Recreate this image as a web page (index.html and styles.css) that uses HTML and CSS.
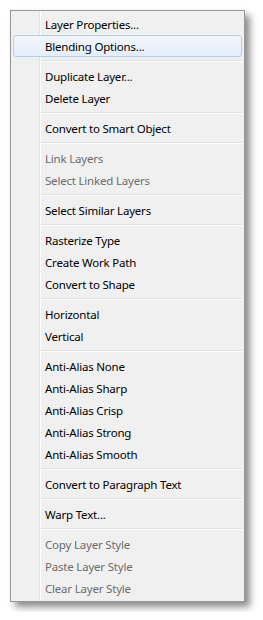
FILE: index.html
```html
<!DOCTYPE html>
<html>
<head>
  <meta charset="UTF-8">
  <title>Layer Context Menu</title>
  <link rel="stylesheet" href="styles.css">
</head>
<body>
  <div class="menu">
    <div class="menu__item">Layer Properties...</div>
    <div class="menu__item menu__item--hover">Blending Options...</div>
    <div class="menu__sep"></div>
    <div class="menu__item">Duplicate Layer...</div>
    <div class="menu__item">Delete Layer</div>
    <div class="menu__sep"></div>
    <div class="menu__item">Convert to Smart Object</div>
    <div class="menu__sep"></div>
    <div class="menu__item menu__item--disabled">Link Layers</div>
    <div class="menu__item menu__item--disabled">Select Linked Layers</div>
    <div class="menu__sep"></div>
    <div class="menu__item">Select Similar Layers</div>
    <div class="menu__sep"></div>
    <div class="menu__item">Rasterize Type</div>
    <div class="menu__item">Create Work Path</div>
    <div class="menu__item">Convert to Shape</div>
    <div class="menu__sep"></div>
    <div class="menu__item">Horizontal</div>
    <div class="menu__item">Vertical</div>
    <div class="menu__sep"></div>
    <div class="menu__item">Anti-Alias None</div>
    <div class="menu__item">Anti-Alias Sharp</div>
    <div class="menu__item">Anti-Alias Crisp</div>
    <div class="menu__item">Anti-Alias Strong</div>
    <div class="menu__item">Anti-Alias Smooth</div>
    <div class="menu__sep"></div>
    <div class="menu__item">Convert to Paragraph Text</div>
    <div class="menu__sep"></div>
    <div class="menu__item">Warp Text...</div>
    <div class="menu__sep"></div>
    <div class="menu__item menu__item--disabled">Copy Layer Style</div>
    <div class="menu__item menu__item--disabled">Paste Layer Style</div>
    <div class="menu__item menu__item--disabled">Clear Layer Style</div>
  </div>
</body>
</html>
```

FILE: styles.css
```css
/* Windows 7 style context menu */
body {
  margin: 0;
  padding: 10px;
  background-color: #ffffff;
  font-family: "Noto Sans", Arial, sans-serif;
}

.menu {
  position: relative;
  width: 233px;
  padding: 2px 0;
  border: 1px solid #979797;
  background-color: #f0f0f0;
  box-shadow: 5px 5px 7px rgba(0, 0, 0, 0.45);
}

/* icon gutter line */
.menu::before {
  content: '';
  position: absolute;
  top: 0;
  bottom: 0;
  left: 28px;
  width: 1px;
  background-color: #e2e3e3;
  border-right: 1px solid #ffffff;
}

.menu__item {
  position: relative;
  height: 22px;
  line-height: 23px;
  margin: 0 2px;
  padding-left: 32px;
  font-size: 11.5px;
  letter-spacing: -0.2px;
  color: #000000;
  white-space: nowrap;
}

.menu__item--disabled {
  color: #6d6d6d;
}

.menu__item--hover {
  height: 20px;
  line-height: 21px;
  padding-left: 31px;
  border: 1px solid #aecff7;
  border-radius: 3px;
  background: linear-gradient(to bottom, #f2f6fc, #e5edf8);
}

.menu__sep {
  position: relative;
  height: 8px;
}

.menu__sep::after {
  content: '';
  position: absolute;
  top: 3px;
  left: 30px;
  right: 2px;
  height: 1px;
  background-color: #e0e0e0;
  border-bottom: 1px solid #ffffff;
}
```
